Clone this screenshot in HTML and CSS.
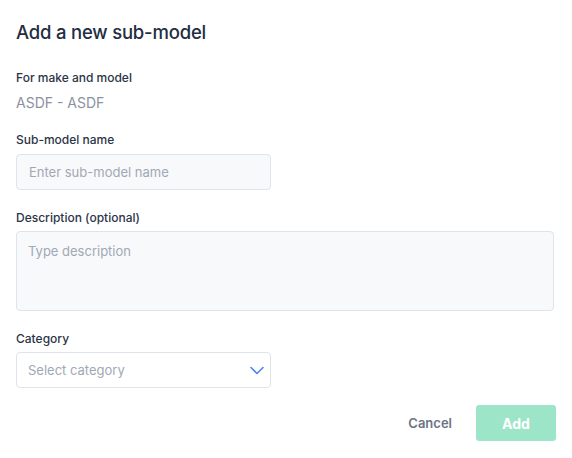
FILE: index.html
```html
<!DOCTYPE html>
<html>
<head>
<meta charset="utf-8">
<link rel="stylesheet" href="styles.css">
</head>
<body>
<div class="dialog">
  <h1 class="title">Add a new sub-model</h1>
  <div class="field info">
    <div class="label">For make and model</div>
    <div class="value">ASDF - ASDF</div>
  </div>
  <div class="field">
    <div class="label">Sub-model name</div>
    <div class="input short"><span class="ph">Enter sub-model name</span></div>
  </div>
  <div class="field">
    <div class="label">Description (optional)</div>
    <div class="input textarea"><span class="ph">Type description</span></div>
  </div>
  <div class="field">
    <div class="label">Category</div>
    <div class="input short select"><span class="ph">Select category</span>
      <svg class="chev" width="14" height="9" viewBox="0 0 14 9"><path d="M1 1.5 L7 7.5 L13 1.5" fill="none" stroke="#4b87f2" stroke-width="1.6" stroke-linecap="round" stroke-linejoin="round"/></svg>
    </div>
  </div>
  <div class="actions">
    <span class="cancel">Cancel</span>
    <span class="add">Add</span>
  </div>
</div>
</body>
</html>
```
FILE: styles.css
```css
* { box-sizing: border-box; }
html, body { margin: 0; padding: 0; background: #fff; }
body { font-family: Inter, "Noto Sans", sans-serif; }
.dialog { width: 572px; padding: 18px 16px 0 16px; }
.title { margin: 0; font-size: 18.5px; font-weight: 500; color: #232d42; line-height: 28px; letter-spacing: -0.2px; }
.field { display: flex; flex-direction: column; }
.info { margin-top: 24px; }
.label { font-size: 12px; font-weight: 500; color: #2b3447; line-height: 16px; }
.value { font-size: 14px; color: #8b92a0; line-height: 18px; margin-top: 8px; }
.field + .field { margin-top: 20px; }
.field .input { margin-top: 6px; }
.field .input.textarea { margin-top: 5px; }
.field .input.select { margin-top: 5px; }
.input { border: 1px solid #dfe3ea; border-radius: 4px; background: #f8f9fb; display: flex; align-items: center; padding: 0 12px; }
.short { width: 255px; height: 36px; }
.textarea { width: 538px; height: 80px; align-items: flex-start; padding-top: 11px; padding-left: 11px; }
.select { background: #fff; justify-content: space-between; padding-left: 11px; padding-right: 6px; }
.ph { font-size: 13px; color: #a1a8b5; line-height: 17px; }
.chev { display: block; }
.actions { display: flex; justify-content: flex-end; align-items: center; margin-top: 17px; gap: 24px; }
.cancel { font-size: 13px; font-weight: 600; color: #6c7484; }
.add { width: 80px; height: 36px; border-radius: 3px; background: #9de5c9; color: #fff; font-size: 14px; font-weight: 700; display: flex; align-items: center; justify-content: center; }
```
